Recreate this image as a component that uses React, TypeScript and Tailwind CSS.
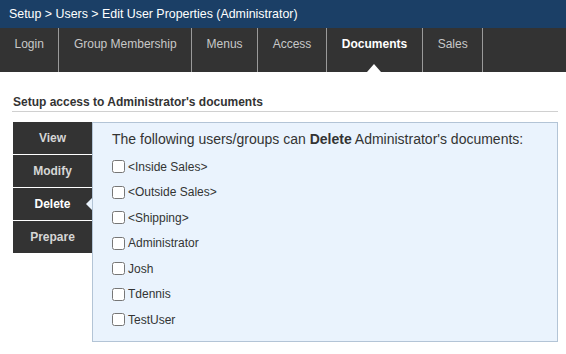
import React from 'react';

const tabs = ['Login', 'Group Membership', 'Menus', 'Access', 'Documents', 'Sales'];
const sideTabs = ['View', 'Modify', 'Delete', 'Prepare'];
const members = ['<Inside Sales>', '<Outside Sales>', '<Shipping>', 'Administrator', 'Josh', 'Tdennis', 'TestUser'];

export default function App() {
  const activeTab = 'Documents';
  const activeSide = 'Delete';

  return (
    <div className="w-[566px] h-[354px] bg-white overflow-hidden" style={{ fontFamily: '"Liberation Sans", Arial, sans-serif' }}>
      {/* Breadcrumb */}
      <div className="h-[28px] bg-[#1b3f66] text-white text-[12.4px] flex items-center pl-[9px]">
        Setup &gt; Users &gt; Edit User Properties (Administrator)
      </div>

      {/* Top tabs */}
      <div className="h-[44px] bg-[#333333] flex">
        {tabs.map((t) => (
          <div
            key={t}
            className={`relative h-full pt-[7px] text-[12px] border-r border-[#9a9a9a] ${
              t === activeTab ? 'text-white font-bold px-[15px]' : 'text-[#c8c8c8] px-[14.5px]'
            }`}
          >
            {t}
            {t === activeTab && (
              <span className="absolute bottom-0 left-1/2 -translate-x-1/2 w-0 h-0 border-l-[7px] border-r-[7px] border-b-[8px] border-l-transparent border-r-transparent border-b-white" />
            )}
          </div>
        ))}
      </div>

      <div className="pl-[13px] pr-[8px] pt-[23px]">
        <div className="text-[12px] leading-[14px] font-bold text-[#333] pb-[2px] border-b border-[#d0d0d0] -ml-[1px] pl-[1px]">
          Setup access to Administrator's documents
        </div>

        <div className="flex mt-[10px]">
          {/* Side tabs */}
          <div className="w-[79px] flex flex-col">
            {sideTabs.map((s) => (
              <div
                key={s}
                className={`relative h-[33px] border-b border-white flex items-center justify-center text-[12px] font-bold ${
                  s === activeSide ? 'text-white' : 'text-[#d6d6d6]'
                } bg-[#333333]`}
              >
                {s}
                {s === activeSide && (
                  <span className="absolute right-0 top-1/2 -translate-y-1/2 w-0 h-0 border-t-[6px] border-b-[6px] border-r-[6px] border-t-transparent border-b-transparent border-r-[#eaf3fd]" />
                )}
              </div>
            ))}
          </div>

          {/* Panel */}
          <div className="flex-1 h-[220px] bg-[#eaf3fd] border border-[#b3c4d6] pl-[19px] pt-[6px]">
            <div className="text-[14px] leading-[20px] text-[#333]">
              The following users/groups can <b>Delete</b> Administrator's documents:
            </div>
            <div className="mt-[5px]">
              {members.map((m) => (
                <label key={m} className="h-[25.5px] flex items-center gap-[3px] text-[12px] text-[#333]">
                  <input type="checkbox" className="m-0 w-[13px] h-[13px]" />
                  {m}
                </label>
              ))}
            </div>
          </div>
        </div>
      </div>
    </div>
  );
}
